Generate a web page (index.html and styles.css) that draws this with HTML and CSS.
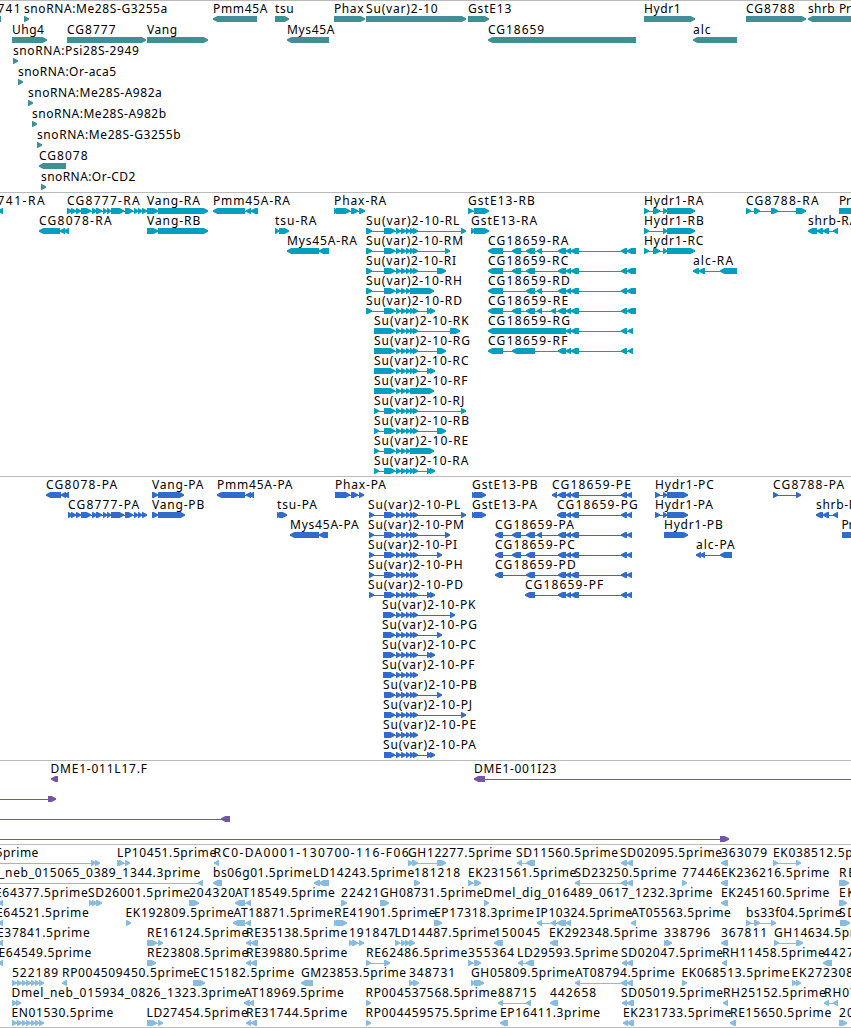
FILE: index.html
```html
<!DOCTYPE html>
<html lang="en">

<head>
    <meta charset="UTF-8">
    <meta name="viewport" content="width=device-width, initial-scale=1.0">
    <title>Genome Browser</title>
    <link rel="stylesheet" href="styles.css">
</head>

<body>
    <main class="browser">
        <section class="track genes" id="genes"></section>
        <section class="track transcripts" id="transcripts"></section>
        <section class="track proteins" id="proteins"></section>
        <section class="track clones" id="clones"></section>
        <section class="track ests" id="ests"></section>
    </main>
    <script src="tracks.js"></script>
</body>

</html>
```

FILE: styles.css
```css
body {
    margin: 0;
    padding: 0;
    background-color: #fff;
    font-family: "Noto Sans", sans-serif;
}

.browser {
    display: flex;
    flex-direction: column;
    width: 851px;
    height: 1028px;
    overflow: hidden;
}

.track {
    box-sizing: border-box;
    flex: none;
    border-top: 1px solid #bababa;
    overflow: hidden;
}

.genes {
    height: 192px;
    color: #3f8f95;
}

.transcripts {
    height: 284px;
    color: #009fbf;
}

.proteins {
    height: 284px;
    color: #316bcb;
}

.clones {
    height: 84px;
    color: #7556a6;
}

.ests {
    height: 184px;
    color: #88bbdd;
    border-bottom: 1px solid #bababa;
}

/* one line of features */
.row {
    display: block;
    width: 851px;
    height: 20px;
    overflow: visible;
}

.genes .row {
    height: 21px;
}

.label {
    fill: #000;
    font-size: 12px;
}

.exon,
.intron {
    fill: currentColor;
}
```

FILE: tracks.js
```js
const NS = 'http://www.w3.org/2000/svg';

// exon groups shared by several transcripts
const SU = '384-395,396-401,401-406,406-410,410-414,413-418';
const SUK = '374-395,396-401,401-406,406-410,410-414,413-418';
const SUP = '383-395,396-401,401-406,406-410,410-414,413-418';
const SUH = '384-395,396-401,401-406,406-410,410-434';
const CGM = '558-566,566-571,571-579';
const CGR = CGM + ',621-627,627-636';
const CGP = CGM + ',621-627,627-632';
const EX8777 = '71-76,76-81,81-91,92-97,96-102,103-107,107-111,111-124,125-133,134-138,138-142,142-147';
const EN = '12-17,17-22,22-26,26-31,31-35,35-39,39-44';

// [label, strand, exons, label x when it is not the feature start]
const tracks = {
    genes: [
        [['741', '-', '-10-1', -2.5], ['snoRNA:Me28S-G3255a', '+', '24-29'], ['Pmm45A', '-', '213-257'], ['tsu', '+', '275-289'], ['Phax', '+', '334-365'], ['Su(var)2-10', '+', '366-466'], ['GstE13', '+', '468-489'], ['Hydr1', '+', '644-695'], ['CG8788', '+', '746-806'], ['shrb', '-', '808-860'], ['Pr', '+', '839-860']],
        [['Uhg4', '+', '12-47'], ['CG8777', '+', '67-146'], ['Vang', '+', '147-208'], ['Mys45A', '-', '287-329'], ['CG18659', '-', '488-636'], ['alc', '-', '693-737']],
        [['snoRNA:Psi28S-2949', '+', '13-18']],
        [['snoRNA:Or-aca5', '+', '18-23']],
        [['snoRNA:Me28S-A982a', '+', '28-33']],
        [['snoRNA:Me28S-A982b', '+', '32-37']],
        [['snoRNA:Me28S-G3255b', '+', '37-42']],
        [['CG8078', '-', '39-66']],
        [['snoRNA:Or-CD2', '+', '41-46']]
    ],
    transcripts: [
        [['741-RA', '-', '-2-3', -2.5], ['CG8777-RA', '+', '67-72,' + EX8777], ['Vang-RA', '+', '147-158,158-208'], ['Pmm45A-RA', '-', '213-245,246-251,251-258'], ['Phax-RA', '+', '334-338,336-350,351-358,359-365'], ['GstE13-RB', '+', '468-473,474-489'], ['Hydr1-RA', '+', '644-649,653-660,663-667,667-695'], ['CG8788-RA', '+', '746-751,754-760,771-778,796-806'], ['Pr', '+', '839-860']],
        [['CG8078-RA', '-', '39-60,60-65,64-69'], ['Vang-RB', '+', '147-158,158-208'], ['tsu-RA', '+', '275-279,279-289'], ['Su(var)2-10-RL', '+', '366-372,' + SU + ',461-466'], ['GstE13-RA', '+', '471-475,474-489'], ['Hydr1-RB', '+', '644-649,663-667,667-695'], ['shrb-RA', '-', '808-817,817-823,823-829,833-838']],
        [['Mys45A-RA', '-', '287-319,319-329'], ['Su(var)2-10-RM', '+', '366-372,' + SU + ',445-450'], ['CG18659-RA', '-', '488-503,512-521,526-535,537-542,' + CGR], ['Hydr1-RC', '+', '644-649,653-660,663-667,667-695']],
        [['Su(var)2-10-RI', '+', '366-372,' + SU + ',437-446'], ['CG18659-RC', '-', '488-503,512-521,526-535,' + CGR], ['alc-RA', '-', '693-699,699-705,720-737']],
        [['Su(var)2-10-RH', '+', '366-372,' + SUH], ['CG18659-RD', '-', '488-503,526-535,537-542,' + CGR]],
        [['Su(var)2-10-RD', '+', '366-372,' + SU + ',427-432,430-435'], ['CG18659-RE', '-', '488-503,512-521,526-535,537-542,551-556,' + CGR]],
        [['Su(var)2-10-RK', '+', SUK + ',450-460'], ['CG18659-RG', '-', '488-566,566-571,571-579,621-627,628-633']],
        [['Su(var)2-10-RG', '+', SUK + ',437-446'], ['CG18659-RF', '-', '488-503,512-535,' + CGM + ',621-627,628-633']],
        [['Su(var)2-10-RC', '+', SUK + ',427-432,430-435']],
        [['Su(var)2-10-RF', '+', '374-395,396-401,401-406,406-410,410-434']],
        [['Su(var)2-10-RJ', '+', '374-379,' + SU + ',461-466']],
        [['Su(var)2-10-RB', '+', '374-379,' + SU + ',437-446']],
        [['Su(var)2-10-RE', '+', '374-379,' + SUH]],
        [['Su(var)2-10-RA', '+', '374-379,' + SU + ',427-432,430-435']]
    ],
    proteins: [
        [['CG8078-PA', '-', '46-61,61-66,64-69'], ['Vang-PA', '+', '152-158,158-184'], ['Pmm45A-PA', '-', '217-245,246-251,249-254'], ['Phax-PA', '+', '335-350,351-358,359-364'], ['GstE13-PB', '+', '472-476,474-486'], ['CG18659-PE', '-', '552-557,' + CGP], ['Hydr1-PC', '+', '655-660,663-667,667-688'], ['CG8788-PA', '+', '773-778,796-801']],
        [['CG8777-PA', '+', '68-72,' + EX8777], ['Vang-PB', '+', '152-158,158-185'], ['tsu-PA', '+', '277-281,279-287'], ['Su(var)2-10-PL', '+', '369-374,' + SU + ',461-466', 368], ['GstE13-PA', '+', '472-476,474-486'], ['CG18659-PG', '-', '557-566,566-571,571-579,621-627,627-632'], ['Hydr1-PA', '+', '655-660,663-667,667-688'], ['shrb-PA', '-', '816-823,823-829,833-838']],
        [['Mys45A-PA', '-', '290-319,319-328'], ['Su(var)2-10-PM', '+', '369-374,' + SU + ',445-450', 368], ['CG18659-PA', '-', '495-503,512-521,526-535,537-542,' + CGP], ['Hydr1-PB', '+', '664-667,665-688'], ['Pr', '+', '842-860', 841.5]],
        [['Su(var)2-10-PI', '+', '369-374,' + SU + ',437-442', 368], ['CG18659-PC', '-', '495-503,512-521,526-535,' + CGP], ['alc-PA', '-', '696-701,700-705,720-732']],
        [['Su(var)2-10-PH', '+', '369-374,' + SU, 368], ['CG18659-PD', '-', '495-503,526-535,' + CGP]],
        [['Su(var)2-10-PD', '+', '369-374,' + SU + ',427-432,430-435', 368], ['CG18659-PF', '-', '525-535,' + CGP]],
        [['Su(var)2-10-PK', '+', SUP + ',450-455', 382]],
        [['Su(var)2-10-PG', '+', SUP + ',437-442', 382]],
        [['Su(var)2-10-PC', '+', SUP + ',427-432,430-435', 382]],
        [['Su(var)2-10-PF', '+', SUP, 382]],
        [['Su(var)2-10-PB', '+', SU + ',437-442', 383]],
        [['Su(var)2-10-PJ', '+', SU + ',461-466', 383]],
        [['Su(var)2-10-PE', '+', SU, 383]],
        [['Su(var)2-10-PA', '+', SU + ',427-432,430-435', 383]]
    ],
    clones: [
        [['DME1-011L17.F', '-', '51-58', 50.5], ['DME1-001I23', '-', '474-485,870-880']],
        [['', '+', '-20--10,48-56']],
        [['', '-', '-20--10,221-230']],
        [['', '+', '-20--10,720-729']]
    ],
    ests: [
        [['5prime', '+', '-20--10,91-96,95-100', -4.5], ['LP10451.5prime', '+', '117-124,125-130'], ['RC0-DA0001-130700-116-F06', '-', '214-219', 213.5], ['GH12277.5prime', '+', '408-413,412-418,437-446'], ['SD11560.5prime', '-', '517-522,526-535', 516], ['SD02095.5prime', '-', '621-627,627-633', 620], ['363079', '-', '721-728'], ['EK038512.5prime', '+', '773-778,796-801']],
        [['_neb_015065_0389_1344.3prime', '-', '-20--10,198-203', -1], ['bs06g01.5prime', '-', '213-222'], ['LD14243.5prime', '-', '314-320,319-329', 313], ['181218', '+', '414-420'], ['EK231561.5prime', '+', '468-473,474-481'], ['SD23250.5prime', '-', '575-580,621-627,627-633', 574.5], ['77446', '+', '682-687'], ['EK236216.5prime', '-', '721-728'], ['RE', '+', '839-849']],
        [['E64377.5prime', '-', '-2-3', -5], ['SD26001.5prime', '+', '89-93,92-97,96-102', 88], ['204320', '+', '189-199'], ['AT18549.5prime', '-', '235-245,246-251'], ['22421', '+', '341-347'], ['GH08731.5prime', '+', '380-389'], ['Dmel_dig_016489_0617_1232.3prime', '+', '484-489', 483.5], ['EK245160.5prime', '-', '721-728'], ['EK', '+', '839-847']],
        [['E64521.5prime', '-', '-2-3', -4], ['EK192809.5prime', '+', '126-131', 125.5], ['AT18871.5prime', '-', '233-245,246-251', 233.5], ['RE41901.5prime', '+', '334-338,336-347'], ['EP17318.3prime', '+', '434-442'], ['IP10324.5prime', '-', '537-542,551-556,557-566,566-571', 536], ['AT05563.5prime', '-', '631-636'], ['bs33f04.5prime', '+', '746-751,754-760,771-776'], ['SD', '+', '840-850', 839]],
        [['E37841.5prime', '-', '-2-3', -3], ['RE16124.5prime', '+', '147-157,158-163'], ['RE35138.5prime', '-', '246-251,251-258'], ['191847', '+', '349-353,352-358,359-364'], ['LD14487.5prime', '+', '395-400,401-406,405-410,409-415', 394.5], ['150045', '-', '494-503'], ['EK292348.5prime', '-', '550-558', 549], ['338796', '+', '664-668,666-672'], ['367811', '-', '721-728'], ['GH14634.5prime', '+', '774-779,796-803']],
        [['E64549.5prime', '-', '-2-3', -1.5], ['RE23808.5prime', '+', '147-156'], ['RE39880.5prime', '-', '246-251,251-257'], ['RE62486.5prime', '+', '366-371,384-390'], ['355364', '+', '468-473,474-481'], ['LD29593.5prime', '-', '518-523,526-534', 517], ['SD02047.5prime', '-', '622-627,627-633', 621], ['RH11458.5prime', '-', '722-727'], ['4427', '-', '823-832']],
        [['522189', '+', EN], ['RP004509450.5prime', '-', '62-67'], ['EC15182.5prime', '+', '193-205'], ['GM23853.5prime', '-', '301-313'], ['348731', '+', '409-414,413-419'], ['GH05809.5prime', '+', '471-475,474-484'], ['AT08794.5prime', '-', '575-580,621-627,627-633'], ['EK068513.5prime', '+', '682-687', 681.5], ['EK272308', '+', '792-797,796-801', 791.5]],
        [['Dmel_neb_015934_0826_1323.3prime', '+', '12-17,16-21', 11.5], ['AT18969.5prime', '-', '244-250,249-254'], ['RP004537568.5prime', '+', '366-371', 365.5], ['88715', '-', '498-503,526-531'], ['442658', '-', '550-558'], ['SD05019.5prime', '-', '622-627,627-634', 621], ['RH25152.5prime', '-', '723-728'], ['RH07', '-', '824-829,833-838']],
        [['EN01530.5prime', '+', EN, 11.5], ['LD27454.5prime', '+', '147-157,158-163', 146.5], ['RE31744.5prime', '-', '246-251,251-257'], ['RP004459575.5prime', '+', '366-371', 365.5], ['EP16411.3prime', '-', '500-508'], ['EK231733.5prime', '-', '623-628,627-634'], ['RE15650.5prime', '-', '730-736'], ['208', '+', '839-847']]
    ]
};

// labels are spaced to the advance widths of a wider face
const ruler = document.createElement('canvas').getContext('2d');
ruler.font = '120px "DejaVu Sans"';

function labelWidth(text) {
    let width = ruler.measureText(text).width / 10 * 1.007;
    if (/^(CG|741).*-[RP][A-Z]$/.test(text)) {
        width += 3.5;
    } else if (/-[RP][A-Z]$/.test(text)) {
        width += 2.2;
    } else if (text.startsWith('RC0-')) {
        width += 14;
    } else if (text.startsWith('DME1-')) {
        width += 1;
    } else if (text.startsWith('snoRNA:Me')) {
        width -= 0.8;
    }
    return width;
}

function add(parent, name, attrs) {
    const el = document.createElementNS(NS, name);
    for (const key in attrs) {
        el.setAttribute(key, attrs[key]);
    }
    parent.appendChild(el);
    return el;
}

function drawExon(svg, a, b, strand) {
    const tip = Math.min(b - a, 5);
    let d;
    if (strand === '+') {
        d = `M${a} 15H${b - tip + 0.7}L${b} 17.2V18.8L${b - tip + 0.7} 21H${a}Z`;
    } else {
        d = `M${b} 15H${a + tip - 0.7}L${a} 17.2V18.8L${a + tip - 0.7} 21H${b}Z`;
    }
    add(svg, 'path', { class: 'exon', d: d });
}

function drawFeature(svg, feature) {
    const [text, strand, exonList, labelX] = feature;
    const exons = exonList.split(',').map(e => e.match(/^(-?\d+)-(-?\d+)$/).slice(1).map(Number));
    const start = exons[0][0];
    const end = exons[exons.length - 1][1];

    if (exons.length > 1) {
        add(svg, 'rect', { class: 'intron', x: start, y: 18, width: end - start, height: 1 });
    }
    exons.forEach(e => drawExon(svg, e[0], e[1], strand));

    if (text) {
        const label = add(svg, 'text', {
            class: 'label',
            x: labelX === undefined ? start : labelX,
            y: 12,
            textLength: labelWidth(text).toFixed(1)
        });
        label.textContent = text;
    }
}

for (const id in tracks) {
    const section = document.getElementById(id);
    tracks[id].forEach(features => {
        const svg = add(section, 'svg', { class: 'row' });
        features.forEach(feature => drawFeature(svg, feature));
    });
}
```
